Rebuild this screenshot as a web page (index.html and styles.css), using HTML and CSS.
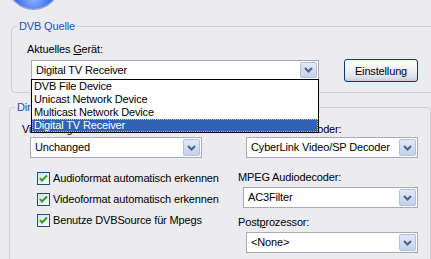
FILE: index.html
```html
<!DOCTYPE html>
<html lang="de">
<head>
    <meta charset="UTF-8">
    <title>DVB Quelle</title>
    <link rel="stylesheet" href="styles.css">
</head>
<body>
    <div class="logo"></div>

    <div class="group group-source">
        <span class="group-title">DVB Quelle</span>
        <div class="label">Aktuelles <u>G</u>erät:</div>
        <div class="source-row">
            <div class="combo combo-device">
                <span class="combo-text">Digital TV Receiver</span>
                <span class="combo-btn"><svg width="9" height="6" viewBox="0 0 9 6"><path d="M1 1 L4.5 4.5 L8 1" fill="none" stroke="#4d6185" stroke-width="2"/></svg></span>
                <ul class="combo-list">
                    <li>DVB File Device</li>
                    <li>Unicast Network Device</li>
                    <li>Multicast Network Device</li>
                    <li class="selected">Digital TV Receiver</li>
                </ul>
            </div>
            <button class="xp-button">Einstellung</button>
        </div>
    </div>

    <div class="group group-filter">
        <span class="group-title">DirectShow Filter</span>
        <div class="columns">
            <div class="col col-left">
                <div class="label">Videoausgabe:</div>
                <div class="combo combo-left">
                    <span class="combo-text">Unchanged</span>
                    <span class="combo-btn"><svg width="9" height="6" viewBox="0 0 9 6"><path d="M1 1 L4.5 4.5 L8 1" fill="none" stroke="#4d6185" stroke-width="2"/></svg></span>
                </div>
                <div class="checks">
                    <label class="check">
                        <svg class="box" width="13" height="13" viewBox="0 0 13 13"><defs><linearGradient id="cb" x1="0" y1="0" x2="1" y2="1"><stop offset="0" stop-color="#dcdcd7"/><stop offset="1" stop-color="#fff"/></linearGradient></defs><rect x="0.5" y="0.5" width="12" height="12" fill="url(#cb)" stroke="#1c5180"/><path d="M3 6 L5 8.5 L10 3.5" fill="none" stroke="#21a121" stroke-width="2"/></svg>
                        <span>Audioformat automatisch erkennen</span>
                    </label>
                    <label class="check">
                        <svg class="box" width="13" height="13" viewBox="0 0 13 13"><rect x="0.5" y="0.5" width="12" height="12" fill="url(#cb)" stroke="#1c5180"/><path d="M3 6 L5 8.5 L10 3.5" fill="none" stroke="#21a121" stroke-width="2"/></svg>
                        <span>Videoformat automatisch erkennen</span>
                    </label>
                    <label class="check">
                        <svg class="box" width="13" height="13" viewBox="0 0 13 13"><rect x="0.5" y="0.5" width="12" height="12" fill="url(#cb)" stroke="#1c5180"/><path d="M3 6 L5 8.5 L10 3.5" fill="none" stroke="#21a121" stroke-width="2"/></svg>
                        <span>Benutze DVBSource für Mpegs</span>
                    </label>
                </div>
            </div>
            <div class="col col-right">
                <div class="label">MPEG Videodecoder:</div>
                <div class="combo combo-video">
                    <span class="combo-text">CyberLink Video/SP Decoder</span>
                    <span class="combo-btn"><svg width="9" height="6" viewBox="0 0 9 6"><path d="M1 1 L4.5 4.5 L8 1" fill="none" stroke="#4d6185" stroke-width="2"/></svg></span>
                </div>
                <div class="label label-audio">MPEG Audiodecoder:</div>
                <div class="combo combo-audio">
                    <span class="combo-text">AC3Filter</span>
                    <span class="combo-btn"><svg width="9" height="6" viewBox="0 0 9 6"><path d="M1 1 L4.5 4.5 L8 1" fill="none" stroke="#4d6185" stroke-width="2"/></svg></span>
                </div>
                <div class="label label-post">Post<u>p</u>rozessor:</div>
                <div class="combo combo-post">
                    <span class="combo-text">&lt;None&gt;</span>
                    <span class="combo-btn"><svg width="9" height="6" viewBox="0 0 9 6"><path d="M1 1 L4.5 4.5 L8 1" fill="none" stroke="#4d6185" stroke-width="2"/></svg></span>
                </div>
            </div>
        </div>
    </div>
</body>
</html>
```

FILE: styles.css
```css
body {
    margin: 0;
    width: 431px;
    height: 259px;
    overflow: hidden;
    background: #ecebef;
    font-family: "Liberation Sans", Arial, sans-serif;
    font-size: 11px;
    letter-spacing: -0.15px;
    color: #000;
}

.logo {
    width: 51px;
    height: 51px;
    margin: -42px 0 0 8px;
    border-radius: 50%;
    background: radial-gradient(circle at 50% 80%, #8fb4ff 0, #3f6ef0 35%, #1b3cc4 70%, #0c2286 100%);
    box-shadow: 0 0 0 1px #9aa0c0;
}

.group {
    position: relative;
    box-sizing: border-box;
    border: 1px solid #d0cfd5;
    border-radius: 4px;
}

.group-title {
    position: absolute;
    top: -7px;
    line-height: 13px;
    padding: 0 2px;
    background: #ecebef;
    color: #2352b5;
}

.label {
    line-height: 13px;
}

/* DVB Quelle */
.group-source {
    margin: 17px -20px 0 11px;
    height: 67px;
    padding: 16px 0 0 15px;
}

.group-source .group-title {
    left: 5px;
}

.source-row {
    display: flex;
    align-items: flex-start;
    margin-top: 4px;
}

.combo {
    position: relative;
    display: flex;
    box-sizing: border-box;
    height: 21px;
    border: 1px solid #a5acb5;
    background: #fff;
}

.combo-text {
    flex: 1;
    padding-left: 4px;
    line-height: 19px;
    white-space: nowrap;
    overflow: hidden;
}

.combo-btn {
    display: flex;
    align-items: center;
    justify-content: center;
    box-sizing: border-box;
    width: 17px;
    margin: 1px;
    border: 1px solid #b3c0da;
    border-radius: 2px;
    background: linear-gradient(#e2e9f7, #c4d1ec);
}

.combo-device {
    width: 288px;
    height: 20px;
    margin-left: 4px;
}

.combo-device .combo-text {
    line-height: 18px;
}

.combo-list {
    position: absolute;
    z-index: 10;
    top: 18px;
    left: -1px;
    box-sizing: border-box;
    width: 288px;
    margin: 0;
    padding: 0;
    list-style: none;
    border: 1px solid #000;
    background: #fff;
}

.combo-list li {
    box-sizing: border-box;
    height: 13px;
    line-height: 13px;
    padding-left: 2px;
    white-space: nowrap;
}

.combo-list li.selected {
    background: #3162b4;
    color: #fff;
    outline: 1px dotted #e0c060;
    outline-offset: -1px;
}

.xp-button {
    box-sizing: border-box;
    width: 74px;
    height: 23px;
    margin: -1px 0 0 25px;
    padding: 0;
    border: 1px solid #003c74;
    border-radius: 3px;
    background: linear-gradient(#ffffff, #f2f2f5 45%, #dfe3ec 80%, #c3cbdd);
    font-family: inherit;
    font-size: 11px;
    letter-spacing: inherit;
    color: #000;
}

/* Filter */
.group-filter {
    margin: 14px 0 0 9px;
    width: 422px;
    height: 152px;
    border-bottom: 0;
    border-radius: 4px 4px 0 0;
    padding: 15px 0 0 12px;
}

.group-filter .group-title {
    left: 5px;
}

.columns {
    display: grid;
    grid-template-columns: 216px 1fr;
}

.combo-left {
    width: 172px;
    margin: 1px 0 0 8px;
}

.checks {
    display: flex;
    flex-direction: column;
    gap: 8px;
    margin: 14px 0 0 15px;
}

.check {
    display: flex;
    align-items: center;
    gap: 3px;
    height: 13px;
    line-height: 13px;
    white-space: nowrap;
}

.box {
    flex: none;
}

.combo-video {
    width: 172px;
    margin: 1px 0 0 8px;
}

.label-audio {
    margin-top: 13px;
}

.combo-audio {
    width: 175px;
    margin: 3px 0 0 5px;
}

.label-post {
    margin-top: 8px;
}

.combo-post {
    width: 172px;
    margin: 3px 0 0 8px;
}
```
